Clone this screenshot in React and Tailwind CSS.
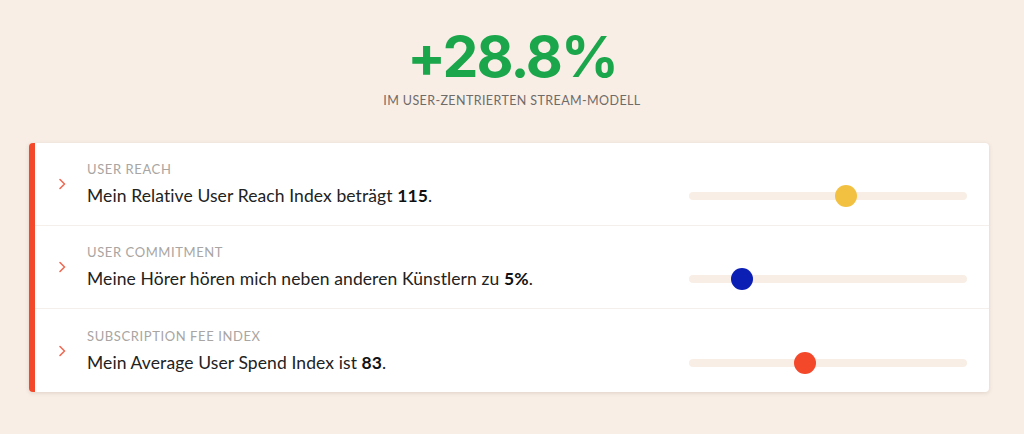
import React from "react";

const rows = [
  { label: "User Reach", text: "Mein Relative User Reach Index beträgt ", value: "115", pos: 56.5, color: "bg-[#f2c142]" },
  { label: "User Commitment", text: "Meine Hörer hören mich neben anderen Künstlern zu ", value: "5%", pos: 19, color: "bg-[#0c1fb5]" },
  { label: "Subscription Fee Index", text: "Mein Average User Spend Index ist ", value: "83", pos: 41.7, color: "bg-[#f4482b]" },
];

const Chevron = () => (
  <svg width="10" height="14" viewBox="0 0 10 14" fill="none" stroke="#ef6b55" strokeWidth="1.6" strokeLinecap="round" strokeLinejoin="round">
    <path d="M3 2.5 L7.5 7 L3 11.5" />
  </svg>
);

const App = () => {
  return (
    <div className="w-[1024px] h-[434px] bg-[#f8eee6] font-['Lato',sans-serif] pt-[26px]">
      {/* Headline */}
      <div className="flex flex-col items-center">
        <h1 className="font-['Inter',sans-serif] font-bold text-[#1ca64c] text-[57px] leading-[62px] tracking-[-2px]">
          +28.8%
        </h1>
        <p className="mt-[4px] text-[12.5px] text-[#6f6b68] tracking-[0.4px] uppercase">
          Im User-zentrierten Stream-Modell
        </p>
      </div>

      {/* Card */}
      <div className="mt-[32px] ml-[29px] w-[960px] bg-white rounded-[4px] border-l-[6px] border-[#f4482b] shadow-[0_1px_4px_rgba(120,90,60,0.18)]">
        {rows.map((row, i) => (
          <div
            key={row.label}
            className={`flex items-center h-[83px] pr-[22px] ${i < rows.length - 1 ? "border-b border-[#f4efeb]" : ""}`}
          >
            <div className="w-[52px] flex justify-center pt-[1px] pl-[1px]">
              <Chevron />
            </div>
            <div className="flex-1">
              <p className="text-[13px] text-[#a8a5a2] uppercase tracking-[0.6px] leading-[16px]">{row.label}</p>
              <p className="mt-[9px] text-[17.5px] text-[#222] leading-[20px] tracking-[0.1px]">
                {row.text}
                <strong className="font-bold text-[#111]">{row.value}</strong>.
              </p>
            </div>
            <div className="relative w-[278px] h-[8px] mt-[25px] rounded-full bg-[#f8eee6]">
              <span
                className={`absolute top-1/2 w-[22px] h-[22px] -translate-x-1/2 -translate-y-1/2 rounded-full ${row.color}`}
                style={{ left: `${row.pos}%` }}
              />
            </div>
          </div>
        ))}
      </div>
    </div>
  );
};

export default App;
